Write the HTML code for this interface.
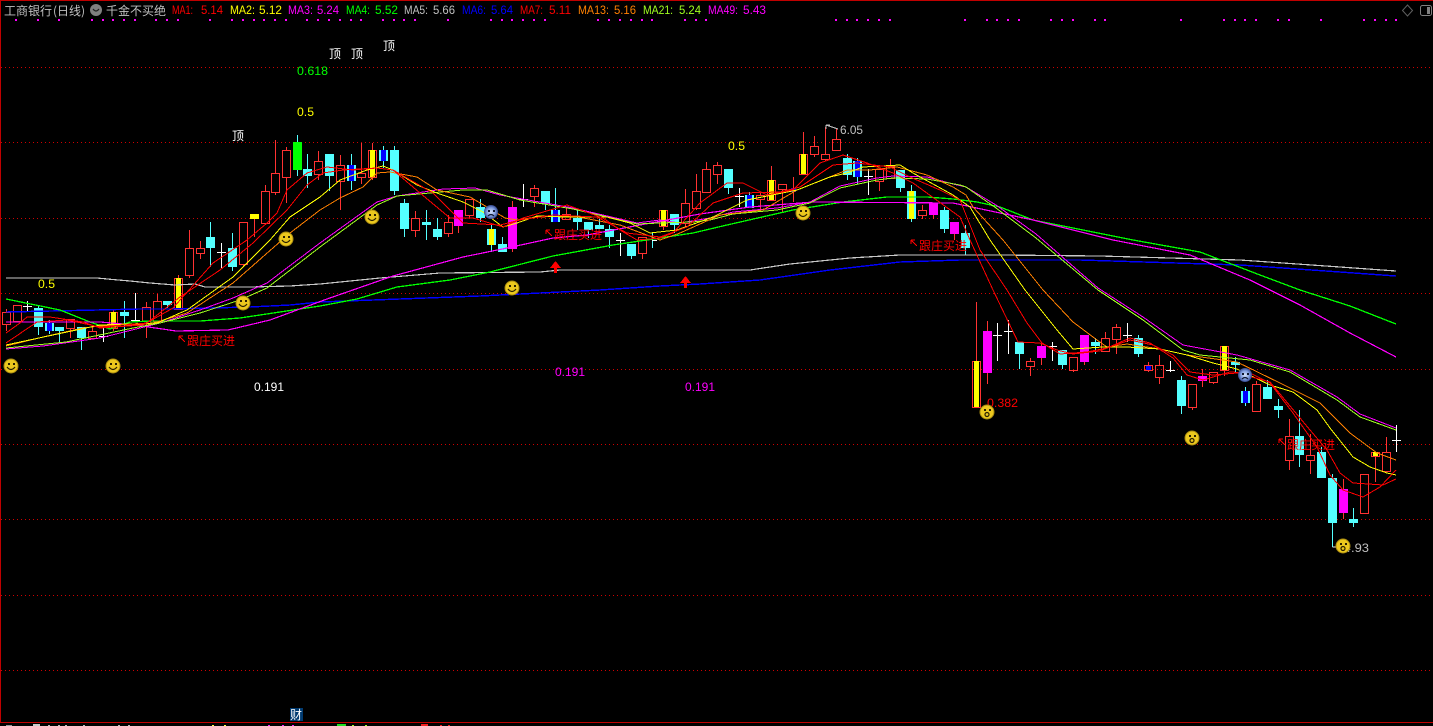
<!DOCTYPE html>
<html lang="zh"><head><meta charset="utf-8"><title>工商银行 (日线)</title>
<style>
html,body{margin:0;padding:0;background:#000;width:1433px;height:726px;overflow:hidden}
svg{display:block}
text{font-family:"Liberation Sans","WenQuanYi Zen Hei","Noto Sans CJK SC",sans-serif;font-size:12px}
.c{font-family:"WenQuanYi Zen Hei","Noto Sans CJK SC",sans-serif;font-size:12px}
.s{shape-rendering:crispEdges}
.l{fill:none;shape-rendering:crispEdges}
</style></head><body>
<svg width="1433" height="726" viewBox="0 0 1433 726" xmlns="http://www.w3.org/2000/svg">
<defs>
<g id="happy"><circle r="7" fill="#ecc81e" stroke="#a88a10" stroke-width="1"/><rect x="-3" y="-3" width="2" height="2" fill="#2a2000"/><rect x="2" y="-3" width="2" height="2" fill="#2a2000"/><path d="M-4 1Q0 6 4 1" fill="none" stroke="#2a2000" stroke-width="1.2"/></g>
<g id="open"><circle r="7" fill="#ecc81e" stroke="#a88a10" stroke-width="1"/><rect x="-3" y="-3" width="2" height="2" fill="#2a2000"/><rect x="2" y="-3" width="2" height="2" fill="#2a2000"/><circle cy="2.5" r="2" fill="none" stroke="#2a2000" stroke-width="1.2"/></g>
<radialGradient id="bl"><stop offset="0" stop-color="#d8e4fa"/><stop offset=".6" stop-color="#7f9ce0"/><stop offset="1" stop-color="#34488e"/></radialGradient>
<g id="sad"><circle r="7" fill="url(#bl)"/><rect x="-3" y="-2" width="2" height="2" fill="#101830"/><rect x="2" y="-2" width="2" height="2" fill="#101830"/><path d="M-3 4Q0 1 3 4" fill="none" stroke="#101830" stroke-width="1.2"/></g>
</defs>
<rect width="1433" height="726" fill="#000"/>
<!-- grid -->
<g stroke="#d00000" stroke-dasharray="1 3" class="s">
<path d="M1 67.5H1433M1 142.5H1433M1 218.5H1433M1 293.5H1433M1 369.5H1433M1 444.5H1433M1 519.5H1433M1 595.5H1433M1 670.5H1433"/>
</g>
<!-- frame -->
<g fill="#c00000" class="s"><rect width="1433" height="1"/><rect width="1" height="723"/><rect y="722" width="1433" height="1"/></g>
<!-- clipped bottom row -->
<g class="s">
<rect x="6" y="725" width="6" height="1" fill="#999"/><rect x="33" y="724" width="7" height="2" fill="#ccc"/>
<path fill="#bbb" d="M48 725h2v1h-2zM58 725h2v1h-2zM65 725h2v1h-2zM83 725h2v1h-2zM118 725h2v1h-2zM128 725h2v1h-2z"/>
<path fill="#ffff40" d="M212 725h2v1h-2zM224 725h2v1h-2z"/>
<path fill="#ff20ff" d="M268 725h2v1h-2zM282 725h2v1h-2zM292 725h2v1h-2z"/>
<rect x="337" y="724" width="9" height="2" fill="#20e020"/><path fill="#a0ff20" d="M352 725h2v1h-2zM365 725h2v1h-2z"/>
<rect x="421" y="724" width="7" height="2" fill="#f02020"/><path fill="#f02020" d="M440 725h2v1h-2zM448 725h2v1h-2z"/>
</g>
<!-- header -->
<text x="4" y="15" class="c" fill="#c0c0c0">工商银行</text>
<text x="53" y="15" fill="#c0c0c0" textLength="32" lengthAdjust="spacingAndGlyphs" class="c">(日线)</text>
<circle cx="96" cy="10" r="6" fill="#808080"/><path d="M93 9q3 4 6 0" fill="none" stroke="#222" stroke-width="1.2"/>
<text x="106" y="15" class="c" fill="#c0c0c0">千金不买绝</text>
<g>
<g fill="#ff0000"><text x="172" y="14" textLength="21" lengthAdjust="spacingAndGlyphs">MA1:</text><text x="201" y="14" textLength="22" lengthAdjust="spacingAndGlyphs">5.14</text></g>
<g fill="#ffff00"><text x="230" y="14" textLength="25" lengthAdjust="spacingAndGlyphs">MA2:</text><text x="259" y="14" textLength="23" lengthAdjust="spacingAndGlyphs">5.12</text></g>
<g fill="#ff00ff"><text x="288" y="14" textLength="25" lengthAdjust="spacingAndGlyphs">MA3:</text><text x="317" y="14" textLength="22" lengthAdjust="spacingAndGlyphs">5.24</text></g>
<g fill="#00ff00"><text x="346" y="14" textLength="24" lengthAdjust="spacingAndGlyphs">MA4:</text><text x="375" y="14" textLength="23" lengthAdjust="spacingAndGlyphs">5.52</text></g>
<g fill="#c0c0c0"><text x="404" y="14" textLength="24" lengthAdjust="spacingAndGlyphs">MA5:</text><text x="433" y="14" textLength="22" lengthAdjust="spacingAndGlyphs">5.66</text></g>
<g fill="#0000ff"><text x="462" y="14" textLength="24" lengthAdjust="spacingAndGlyphs">MA6:</text><text x="491" y="14" textLength="22" lengthAdjust="spacingAndGlyphs">5.64</text></g>
<g fill="#ff0000"><text x="520" y="14" textLength="23" lengthAdjust="spacingAndGlyphs">MA7:</text><text x="549" y="14" textLength="22" lengthAdjust="spacingAndGlyphs">5.11</text></g>
<g fill="#ff8000"><text x="578" y="14" textLength="31" lengthAdjust="spacingAndGlyphs">MA13:</text><text x="614" y="14" textLength="22" lengthAdjust="spacingAndGlyphs">5.16</text></g>
<g fill="#a0ff20"><text x="643" y="14" textLength="30" lengthAdjust="spacingAndGlyphs">MA21:</text><text x="679" y="14" textLength="22" lengthAdjust="spacingAndGlyphs">5.24</text></g>
<g fill="#ff00ff"><text x="708" y="14" textLength="30" lengthAdjust="spacingAndGlyphs">MA49:</text><text x="743" y="14" textLength="23" lengthAdjust="spacingAndGlyphs">5.43</text></g>
</g>
<!-- right icons -->
<path d="M1407.5 5l5 5.5-5 5.5-5-5.5z" fill="none" stroke="#606060"/>
<rect x="1420.5" y="5.5" width="11" height="10" rx="2" fill="none" stroke="#808080"/><rect x="1427" y="7" width="3" height="7" fill="#808080"/>
<!-- dots -->
<path class="s" fill="#ff00ff" d="M15 19h2v2h-2zM37 19h2v2h-2zM58 19h2v2h-2zM91 19h2v2h-2zM102 19h2v2h-2zM112 19h2v2h-2zM123 19h2v2h-2zM134 19h2v2h-2zM155 19h2v2h-2zM166 19h2v2h-2zM177 19h2v2h-2zM209 19h2v2h-2zM231 19h2v2h-2zM242 19h2v2h-2zM253 19h2v2h-2zM263 19h2v2h-2zM274 19h2v2h-2zM285 19h2v2h-2zM306 19h2v2h-2zM317 19h2v2h-2zM328 19h2v2h-2zM339 19h2v2h-2zM350 19h2v2h-2zM360 19h2v2h-2zM382 19h2v2h-2zM393 19h2v2h-2zM403 19h2v2h-2zM414 19h2v2h-2zM447 19h2v2h-2zM490 19h2v2h-2zM501 19h2v2h-2zM511 19h2v2h-2zM522 19h2v2h-2zM533 19h2v2h-2zM544 19h2v2h-2zM597 19h2v2h-2zM608 19h2v2h-2zM619 19h2v2h-2zM630 19h2v2h-2zM641 19h2v2h-2zM651 19h2v2h-2zM684 19h2v2h-2zM695 19h2v2h-2zM705 19h2v2h-2zM835 19h2v2h-2zM846 19h2v2h-2zM856 19h2v2h-2zM867 19h2v2h-2zM878 19h2v2h-2zM889 19h2v2h-2zM964 19h2v2h-2zM986 19h2v2h-2zM996 19h2v2h-2zM1007 19h2v2h-2zM1018 19h2v2h-2zM1050 19h2v2h-2zM1061 19h2v2h-2zM1072 19h2v2h-2zM1094 19h2v2h-2zM1104 19h2v2h-2zM1180 19h2v2h-2zM1223 19h2v2h-2zM1234 19h2v2h-2zM1244 19h2v2h-2zM1255 19h2v2h-2zM1277 19h2v2h-2zM1288 19h2v2h-2zM1320 19h2v2h-2zM1363 19h2v2h-2zM1374 19h2v2h-2zM1385 19h2v2h-2zM1395 19h2v2h-2z"/>
<!-- red wicks -->
<path class="l" stroke="#ff3232" d="M6.500 309V312M6.500 324V331M70.500 328V338M92.500 325V331M146.500 302V307M146.500 321V338M157.500 294V301M189.500 230V248M189.500 275V278M200.500 241V248M200.500 253V259M243.500 264V267M254.500 219V237M265.500 185V191M265.500 223V225M275.500 140V173M275.500 192V195M286.500 147V150M286.500 177V203M318.500 151V161M318.500 174V180M340.500 155V165M340.500 181V210M361.500 143V173M361.500 177V184M415.500 211V218M415.500 230V237M448.500 215V222M448.500 233V237M458.500 226V233M469.500 215V218M512.500 201V207M512.500 249V252M534.500 185V188M534.500 196V207M566.500 208V214M642.500 253V259M685.500 189V203M685.500 223V227M696.500 174V191M696.500 208V210M706.500 162V169M717.500 162V165M717.500 174V184M760.500 192V195M760.500 199V210M782.500 189V213M793.500 177V202M814.500 136V146M814.500 154V157M825.500 127V154M825.500 159V161M836.500 128V139M879.500 181V191M890.500 159V166M922.500 205V210M922.500 215V219M933.500 215V219M954.500 234V240M1030.500 358V361M1030.500 366V376M1073.500 370V372M1105.500 332V338M1116.500 324V327M1116.500 339V354M1148.500 362V372M1159.500 355V365M1159.500 377V384M1192.500 407V410M1213.500 382V384M1202.500 369V387M1256.500 381V384M1289.500 419V436M1289.500 460V470M1310.500 434V455M1310.500 460V474M1343.500 479V489M1343.500 513V519M1375.500 456V482M1386.500 437V452M987.500 321V331M987.500 373V384M1041.500 343V346M1041.500 358V365M1084.500 362V365M113.500 309V312M113.500 328V331M178.500 275V278M372.500 143V150M372.500 177V180M663.500 226V230M771.500 166V180M803.500 132V154M976.500 302V361M1224.500 370V376"/>
<!-- red hollow bodies -->
<path class="l" stroke="#ff3232" d="M2.500 312.500h8v12h-8zM13.500 305.500h8v16h-8zM66.500 319.500h8v9h-8zM88.500 331.500h8v7h-8zM142.500 307.500h8v14h-8zM153.500 301.500h8v20h-8zM185.500 248.500h8v27h-8zM196.500 248.500h8v5h-8zM239.500 222.500h8v42h-8zM261.500 191.500h8v32h-8zM271.500 173.500h8v19h-8zM282.500 150.500h8v27h-8zM314.500 161.500h8v13h-8zM336.500 165.500h8v16h-8zM357.500 173.500h8v4h-8zM411.500 218.500h8v12h-8zM444.500 222.500h8v11h-8zM465.500 199.500h8v16h-8zM530.500 188.500h8v8h-8zM562.500 214.500h8v5h-8zM638.500 237.500h8v16h-8zM681.500 203.500h8v20h-8zM692.500 191.500h8v17h-8zM702.500 169.500h8v23h-8zM713.500 165.500h8v9h-8zM756.500 195.500h8v4h-8zM778.500 184.500h8v5h-8zM810.500 146.500h8v8h-8zM821.500 154.500h8v5h-8zM832.500 139.500h8v11h-8zM875.500 169.500h8v12h-8zM886.500 166.500h8v12h-8zM918.500 210.500h8v5h-8zM1026.500 361.500h8v5h-8zM1069.500 357.500h8v13h-8zM1101.500 338.500h8v13h-8zM1112.500 327.500h8v12h-8zM1155.500 365.500h8v12h-8zM1188.500 384.500h8v23h-8zM1209.500 372.500h8v10h-8zM1252.500 384.500h8v27h-8zM1285.500 436.500h8v24h-8zM1306.500 455.500h8v5h-8zM1360.500 474.500h8v39h-8zM1382.500 452.500h8v19h-8zM109.500 312.500h8v16h-8zM174.500 278.500h8v31h-8zM368.500 150.500h8v27h-8zM659.500 210.500h8v16h-8zM767.500 180.500h8v20h-8zM799.500 154.500h8v20h-8zM972.500 361.500h8v46h-8zM1220.500 346.500h8v24h-8zM1371.500 452.500h8v4h-8zM1144.500 365.500h8v5h-8z"/>
<!-- cyan wicks -->
<path class="l" stroke="#54ffff" d="M38.500 305V335M49.500 320V334M59.500 331V342M81.500 338V350M124.500 301V338M167.500 305V308M210.500 222V267M232.500 233V271M297.500 135V176M307.500 154V188M329.500 176V191M351.500 154V190M383.500 146V168M394.500 146V195M404.500 199V237M426.500 210V240M437.500 218V240M480.500 199V222M491.500 225V252M502.500 237V244M545.500 204V210M555.500 188V210M577.500 210V230M588.500 230V238M599.500 218V225M609.500 225V248M631.500 256V259M652.500 233V248M674.500 225V233M728.500 188V194M749.500 192V208M847.500 154V180M857.500 158V184M900.500 188V192M911.500 185V222M944.500 207V233M965.500 225V255M1019.500 354V369M1062.500 365V369M1095.500 338V354M1138.500 335V357M1181.500 376V414M1235.500 357V372M1245.500 387V406M1267.500 380V387M1278.500 399V418M1299.500 410V467M1321.500 447V452M1332.500 474V547M1353.500 508V527"/>
<path class="l" stroke="#e8e8e8" d="M1332.500 547H1346"/>
<!-- cyan bodies -->
<path class="s" fill="#54ffff" d="M34 308h9v19h-9zM45 323h9v8h-9zM55 327h9v4h-9zM77 327h9v11h-9zM120 312h9v4h-9zM163 301h9v4h-9zM206 237h9v11h-9zM228 248h9v19h-9zM303 169h9v7h-9zM325 154h9v22h-9zM347 165h9v16h-9zM379 150h9v11h-9zM390 150h9v41h-9zM400 203h9v26h-9zM422 222h9v3h-9zM433 229h9v8h-9zM476 207h9v11h-9zM487 229h9v16h-9zM498 244h9v8h-9zM541 191h9v13h-9zM551 210h9v12h-9zM573 218h9v4h-9zM584 222h9v8h-9zM595 225h9v4h-9zM605 229h9v8h-9zM627 244h9v12h-9zM670 214h9v11h-9zM724 169h9v19h-9zM745 195h9v13h-9zM843 158h9v17h-9zM853 161h9v16h-9zM896 170h9v18h-9zM907 191h9v28h-9zM940 210h9v19h-9zM961 233h9v15h-9zM1015 342h9v12h-9zM1058 350h9v15h-9zM1091 342h9v4h-9zM1134 338h9v16h-9zM1177 380h9v26h-9zM1231 362h9v3h-9zM1241 391h9v12h-9zM1263 387h9v12h-9zM1274 406h9v4h-9zM1295 436h9v19h-9zM1317 452h9v26h-9zM1328 478h9v45h-9zM1349 519h9v4h-9z"/>
<!-- blue inners -->
<path class="s" fill="#0000ff" d="M47 323h5v8h-5zM349 165h5v16h-5zM381 150h5v11h-5zM553 210h5v12h-5zM747 195h5v13h-5zM855 161h5v16h-5zM1243 391h5v12h-5zM791 188h5v4h-5zM1146 366h5v4h-5z"/>
<!-- yellow -->
<path class="s" fill="#ffff00" d="M111 312h5v16h-5zM176 278h5v31h-5zM370 150h5v27h-5zM661 210h5v16h-5zM769 180h5v20h-5zM801 154h5v20h-5zM974 361h5v46h-5zM1222 346h5v24h-5zM489 229h5v16h-5zM909 191h5v28h-5zM250 214h9v5h-9zM1373 452h5v4h-5z"/>
<!-- green, magenta bodies -->
<rect class="s" x="293" y="142" width="9" height="28" fill="#00ff00"/>
<path class="s" fill="#ff00ff" d="M454 210h9v16h-9zM508 207h9v42h-9zM929 203h9v12h-9zM950 222h9v12h-9zM983 331h9v42h-9zM1037 346h9v12h-9zM1080 335h9v27h-9zM1198 376h9v5h-9zM1339 489h9v24h-9z"/>
<!-- white crosses -->
<path class="l" stroke="#fff" d="M27.500 301V311M23 306.500H32M103.500 325V342M99 336.500H108M135.500 293V322M131 320.500H140M221.500 243V268M217 252.500H226M523.500 184V207M519 199.500H528M620.500 233V256M616 240.500H625M652 240.500H657M739.500 188V207M735 196.500H744M868.500 169V195M864 176.500H873M997.500 323V361M993 335.500H1002M1008.500 320V354M1004 331.500H1013M1052.500 342V361M1048 346.500H1057M1127.500 323V342M1123 335.500H1132M1170.500 361V372M1166 370.500H1175M1396.500 425V452M1392 440.500H1401"/>
<!-- slow lines -->
<polyline class="l" stroke="#c8c8c8" stroke-width="1.2" points="6,278 97,278 118,280 130,281 150,283 175,285 195,284 205,287 250,287 290,286 320,284 380,278 440,273 540,272 560,270 660,270 700,270 750,270 790,264 850,258 900,255 1000,255 1100,256 1240,260 1340,267 1396,271"/>
<polyline class="l" stroke="#0000ff" stroke-width="1.4" points="6,312 97,310 140,309 170,309 210,308 250,307 290,305 320,302 400,299 480,296 540,293 600,290 660,286 700,284 760,280 830,270 900,262 960,260 1080,260 1240,265 1340,272 1396,276"/>
<polyline class="l" stroke="#00ff00" stroke-width="1.3" points="6,299 60,310 90,322 110,329 130,322 150,321 200,321 240,318 280,312 320,306 357,299 397,287 450,280 490,272 553,256 613,245 660,238 693,233 727,225 793,210 843,202 887,197 927,197 953,199 977,202 1000,207 1033,220 1133,240 1200,252 1260,275 1300,290 1350,306 1396,324"/>
<polyline class="l" stroke="#ff00ff" stroke-width="1.2" points="6,322 100,322 135,325 176,331 228,330 270,320 327,299 393,276 463,257 507,248 553,238 587,235 640,225 700,214 750,207 813,202 953,203 1033,220 1113,240 1190,255 1250,280 1300,305 1350,333 1396,357"/>
<!-- mid pair -->
<polyline class="l" stroke="#ff00ff" stroke-width="1" points="6,349 43,346 100,338 160,323 200,310 233,298 267,283 320,243 377,202 397,196 443,189 475,188 500,195 573,208 637,223 660,220 680,223 710,218 733,212 777,208 810,202 840,186 877,178 893,176 927,177 953,184 966,187 996,205 1036,234 1098,288 1143,317 1183,345 1237,355 1290,370 1337,397 1360,414 1396,428"/>
<polyline class="l" stroke="#a0ff20" stroke-width="1" points="6,348 66,342 133,328 160,323 200,313 240,300 267,288 320,247 377,205 397,196 463,190 487,190 520,200 573,209 620,220 637,224 660,223 693,222 710,220 733,214 777,210 810,203 840,188 877,180 893,178 927,179 960,185 966,187 996,208 1036,238 1098,290 1143,320 1183,350 1200,355 1250,360 1290,372 1337,400 1360,417 1396,430"/>
<!-- orange -->
<polyline class="l" stroke="#ff8000" points="6,346 43,337 83,328 100,326 150,324 187,313 233,283 290,233 320,210 340,198 363,187 377,173 390,172 417,177 437,190 470,197 487,207 505,218 517,220 537,217 573,216 620,225 660,240 680,233 720,215 763,210 797,190 827,178 847,170 870,170 897,167 927,175 953,187 966,195 973,207 1003,240 1043,290 1073,322 1097,340 1107,347 1127,344 1160,349 1187,355 1237,362 1280,383 1320,403 1350,433 1377,453 1396,460"/>
<!-- yellow -->
<polyline class="l" stroke="#ffff00" points="6,345 67,332 100,325 157,323 187,310 233,277 270,240 290,217 320,197 340,180 367,170 383,166 393,170 417,185 437,193 463,202 483,212 503,227 517,223 537,216 567,217 607,217 630,223 650,233 677,230 713,217 747,200 797,190 830,177 847,173 863,167 900,165 913,173 953,195 970,207 990,240 1025,290 1057,330 1073,349 1103,347 1127,347 1160,349 1187,355 1213,363 1237,369 1270,385 1293,392 1317,410 1330,428 1353,457 1370,467 1387,473 1396,475"/>
<!-- fast reds -->
<polyline class="l" stroke="#ff0000" points="6,333 20,323 27,317 50,317 83,322 100,328 143,325 173,308 213,263 247,240 267,223 277,213 287,190 307,173 327,167 353,170 377,168 393,170 420,193 450,218 473,218 503,227 523,218 567,205 603,218 620,230 637,240 660,238 673,233 700,203 727,183 743,183 767,195 793,190 820,163 843,155 867,163 893,173 913,183 960,217 970,240 993,290 1018,342 1040,343 1057,350 1073,354 1100,351 1130,338 1150,343 1173,358 1187,375 1203,380 1230,372 1250,373 1270,383 1293,413 1317,447 1330,475 1343,490 1363,497 1380,487 1396,470"/>
<polyline class="l" stroke="#ff0000" points="6,343 37,322 67,320 100,327 147,323 180,297 220,270 253,243 287,210 307,185 323,173 343,170 377,168 393,170 433,193 463,223 500,225 520,220 553,215 597,217 627,233 660,237 687,227 713,203 743,193 780,192 800,187 833,165 857,163 890,167 910,177 940,190 960,200 980,250 1007,290 1027,323 1042,343 1060,354 1087,352 1107,348 1130,340 1153,345 1173,355 1190,372 1213,375 1237,373 1270,382 1310,430 1327,450 1340,473 1353,483 1383,485 1396,479"/>
<!-- arrows -->
<path class="s" fill="#ff0000" d="M555.500 261L561 268H557V273H554V268H550zM685.500 276L691 283H687V288H684V283H680z"/>
<!-- labels -->
<g fill="#fff"><text x="232" y="140" class="c">顶</text><text x="329" y="58" class="c">顶</text><text x="351" y="58" class="c">顶</text><text x="383" y="50" class="c">顶</text></g>
<text x="297" y="75" fill="#00ff00" textLength="31" lengthAdjust="spacingAndGlyphs">0.618</text>
<text x="297" y="116" fill="#ffff00" textLength="17" lengthAdjust="spacingAndGlyphs">0.5</text>
<text x="728" y="150" fill="#ffff00" textLength="17" lengthAdjust="spacingAndGlyphs">0.5</text>
<text x="38" y="288" fill="#ffff00" textLength="17" lengthAdjust="spacingAndGlyphs">0.5</text>
<text x="254" y="391" fill="#fff" textLength="30" lengthAdjust="spacingAndGlyphs">0.191</text>
<text x="555" y="376" fill="#ff00ff" textLength="30" lengthAdjust="spacingAndGlyphs">0.191</text>
<text x="685" y="391" fill="#ff00ff" textLength="30" lengthAdjust="spacingAndGlyphs">0.191</text>
<text x="987" y="407" fill="#ff0000" textLength="31" lengthAdjust="spacingAndGlyphs">0.382</text>
<text x="840" y="134" fill="#c0c0c0" textLength="23" lengthAdjust="spacingAndGlyphs">6.05</text>
<path class="l" stroke="#c0c0c0" d="M826 125L838 129M826 125H830M826 125V129"/>
<!-- annotations -->
<g fill="#ff0000">
<path class="l" stroke="#ff0000" d="M179 336L185 342M179 336H183M179 336V340M546 230L552 236M546 230H550M546 230V234M911 240L917 246M911 240H915M911 240V244M1279 439L1285 445M1279 439H1283M1279 439V443"/>
<text x="187" y="345" class="c">跟庄买进</text>
<text x="554" y="239" class="c">跟庄买进</text>
<text x="919" y="250" class="c">跟庄买进</text>
<text x="1287" y="449" class="c">跟庄买进</text>
</g>
<!-- faces -->
<use href="#happy" x="11" y="366"/><use href="#happy" x="113" y="366"/><use href="#happy" x="243" y="303"/><use href="#happy" x="286" y="239"/><use href="#happy" x="372" y="217"/><use href="#happy" x="512" y="288"/><use href="#happy" x="803" y="213"/>
<use href="#sad" x="491" y="212"/><use href="#sad" x="1245" y="375"/>
<use href="#open" x="987" y="412"/><use href="#open" x="1192" y="438"/>
<text x="1351" y="552" fill="#c0c0c0" textLength="18" lengthAdjust="spacingAndGlyphs">.93</text>
<text x="1344" y="552" fill="#c0c0c0">4</text>
<use href="#open" x="1343" y="546"/>
<!-- cai -->
<rect class="s" x="290" y="708" width="13" height="13" fill="#003a70"/>
<text x="290" y="719" class="c" fill="#fff">财</text>
</svg>
</body></html>
